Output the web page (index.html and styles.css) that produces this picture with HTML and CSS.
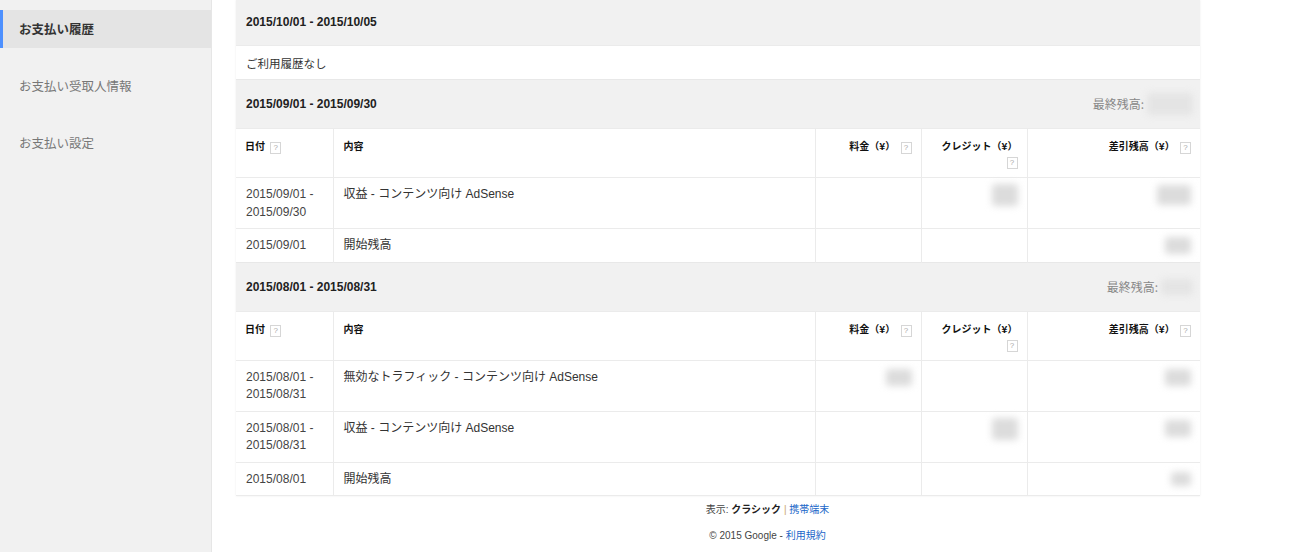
FILE: index.html
```html
<!DOCTYPE html>
<html lang="ja">
<head>
<meta charset="utf-8">
<title>お支払い履歴</title>
<link rel="stylesheet" href="styles.css">
</head>
<body>
<div class="page">
  <nav class="sidebar">
    <div class="nav-item active">お支払い履歴</div>
    <div class="nav-item">お支払い受取人情報</div>
    <div class="nav-item">お支払い設定</div>
  </nav>
  <main class="main">
    <table class="history">
      <colgroup>
        <col class="c-date"><col class="c-desc"><col class="c-amt"><col class="c-amt"><col class="c-bal">
      </colgroup>
      <tr class="period first">
        <td colspan="5"><span class="period-range">2015/10/01 - 2015/10/05</span></td>
      </tr>
      <tr class="empty">
        <td colspan="5">ご利用履歴なし</td>
      </tr>
      <tr class="period">
        <td colspan="5">
          <div class="period-inner">
            <span class="period-range">2015/09/01 - 2015/09/30</span>
            <span class="final">最終残高: <span class="blur b-final1"></span></span>
          </div>
        </td>
      </tr>
      <tr class="colhead">
        <th class="l">日付 <span class="q">?</span></th>
        <th class="l">内容</th>
        <th class="r">料金（¥） <span class="q">?</span></th>
        <th class="r">クレジット（¥）<br><span class="q">?</span></th>
        <th class="r">差引残高（¥） <span class="q">?</span></th>
      </tr>
      <tr class="data">
        <td class="date">2015/09/01 -<br>2015/09/30</td>
        <td>収益 - コンテンツ向け AdSense</td>
        <td class="r"></td>
        <td class="r"><span class="blur b-lg"></span></td>
        <td class="r"><span class="blur b-xl"></span></td>
      </tr>
      <tr class="data">
        <td class="date">2015/09/01</td>
        <td>開始残高</td>
        <td class="r"></td>
        <td class="r"></td>
        <td class="r"><span class="blur b-md"></span></td>
      </tr>
      <tr class="period">
        <td colspan="5">
          <div class="period-inner">
            <span class="period-range">2015/08/01 - 2015/08/31</span>
            <span class="final">最終残高: <span class="blur b-final2"></span></span>
          </div>
        </td>
      </tr>
      <tr class="colhead">
        <th class="l">日付 <span class="q">?</span></th>
        <th class="l">内容</th>
        <th class="r">料金（¥） <span class="q">?</span></th>
        <th class="r">クレジット（¥）<br><span class="q">?</span></th>
        <th class="r">差引残高（¥） <span class="q">?</span></th>
      </tr>
      <tr class="data">
        <td class="date">2015/08/01 -<br>2015/08/31</td>
        <td>無効なトラフィック - コンテンツ向け AdSense</td>
        <td class="r"><span class="blur b-md"></span></td>
        <td class="r"></td>
        <td class="r"><span class="blur b-md"></span></td>
      </tr>
      <tr class="data">
        <td class="date">2015/08/01 -<br>2015/08/31</td>
        <td>収益 - コンテンツ向け AdSense</td>
        <td class="r"></td>
        <td class="r"><span class="blur b-lg"></span></td>
        <td class="r"><span class="blur b-md"></span></td>
      </tr>
      <tr class="data">
        <td class="date">2015/08/01</td>
        <td>開始残高</td>
        <td class="r"></td>
        <td class="r"></td>
        <td class="r"><span class="blur b-sm"></span></td>
      </tr>
    </table>
    <footer class="footer">
      <div class="f-line">表示: <b>クラシック</b> <span class="sep">|</span> <a class="link">携帯端末</a></div>
      <div class="f-line">© 2015 Google - <a class="link">利用規約</a></div>
    </footer>
  </main>
</div>
</body>
</html>
```

FILE: styles.css
```css
html, body {
  margin: 0;
  padding: 0;
  background: #fff;
}
body {
  font-family: "Liberation Sans", Arial, "Noto Sans CJK JP", sans-serif;
  font-size: 12px;
  color: #333;
}
.page {
  display: flex;
  min-height: 552px;
}
.sidebar {
  width: 211px;
  flex: none;
  background: #f1f1f1;
  border-right: 1px solid #e6e6e6;
  padding-top: 10px;
}
.nav-item {
  height: 38px;
  line-height: 38px;
  padding-left: 19px;
  margin-bottom: 19px;
  font-family: "Noto Sans CJK JP", sans-serif;
  font-size: 12.5px;
  color: #777;
}
.nav-item.active {
  background: #e4e4e4;
  color: #333;
  font-weight: bold;
  box-shadow: inset 3px 0 0 #4d90fe;
}
.main {
  flex: 1;
  padding-left: 24px;
}
.history {
  width: 964px;
  border-collapse: collapse;
  table-layout: fixed;
  box-shadow: 0 0 2px rgba(0, 0, 0, 0.08);
}
.c-date { width: 97px; }
.c-desc { width: 482px; }
.c-amt { width: 106px; }
.c-bal { width: 173px; }
.history td, .history th {
  border-top: 1px solid #ebebeb;
  vertical-align: top;
}
.period td {
  background: #f1f1f1;
  padding: 16px 10px 16px;
  line-height: 16px;
  border-top: 1px solid #e8e8e8;
}
.period.first td {
  padding-top: 14px;
  padding-bottom: 15px;
  border-top: 0;
}
.period-range {
  font-weight: bold;
  color: #222;
}
.period-inner {
  display: flex;
  justify-content: space-between;
  align-items: center;
  height: 16px;
}
.final {
  color: #888;
  font-family: "Noto Sans CJK JP", sans-serif;
  font-size: 12px;
  display: flex;
  align-items: center;
  gap: 3px;
  margin-right: -3px;
  height: 16px;
}
.empty td {
  padding: 9px 10px 8px;
  line-height: 16px;
  font-family: "Noto Sans CJK JP", sans-serif;
  font-size: 11.5px;
  color: #333;
}
.colhead th {
  font-family: "Noto Sans CJK JP", sans-serif;
  font-size: 10px;
  font-weight: bold;
  color: #111;
  padding: 9px 10px 8px;
  line-height: 15px;
  border-left: 1px solid #ebebeb;
}
.colhead th:first-child { border-left: 0; padding-left: 9px; }
.colhead th.r { padding-right: 9px; }
.l { text-align: left; }
.r { text-align: right; }
.q {
  display: inline-block;
  width: 9px;
  height: 10px;
  line-height: 10px;
  border: 1px solid #d6d6d6;
  color: #aaa;
  font-family: "Liberation Sans", Arial, sans-serif;
  font-size: 8px;
  font-weight: normal;
  text-align: center;
  margin-left: 3px;
}
.data td {
  padding: 8px 10px 7px;
  line-height: 17.5px;
  border-left: 1px solid #ebebeb;
  font-family: "Liberation Sans", Arial, "Noto Sans CJK JP", sans-serif;
  font-size: 12px;
  color: #333;
}
.data td:first-child { border-left: 0; }
.data td.date { color: #444; }
.data td.r { padding-right: 9px; }
.blur {
  display: inline-block;
  background: #dcdcdc;
  filter: blur(3.5px);
  border-radius: 3px;
  vertical-align: top;
}
.b-xl { width: 34px; height: 20px; margin: -1px 0; }
.b-lg { width: 26px; height: 22px; margin: -2px 0; }
.b-md { width: 26px; height: 17px; }
.b-sm { width: 20px; height: 14px; margin-top: 1px; }
.b-final1 { width: 46px; height: 22px; margin: -3px 0; background: #e4e4e4; }
.b-final2 { width: 32px; height: 16px; background: #e4e4e4; }
.history tr:last-child td { border-bottom: 1px solid #ebebeb; }
.footer {
  padding-top: 6px;
  text-align: center;
  font-size: 10px;
  color: #444;
}
.f-line {
  line-height: 14px;
  margin-bottom: 11px;
  font-family: "Liberation Sans", Arial, "Noto Sans CJK JP", sans-serif;
}
.f-line b { color: #222; font-family: "Noto Sans CJK JP", sans-serif; }
.sep { color: #c9a96e; }
.link { color: #1a66c8; text-decoration: none; font-family: "Noto Sans CJK JP", sans-serif; }
```
